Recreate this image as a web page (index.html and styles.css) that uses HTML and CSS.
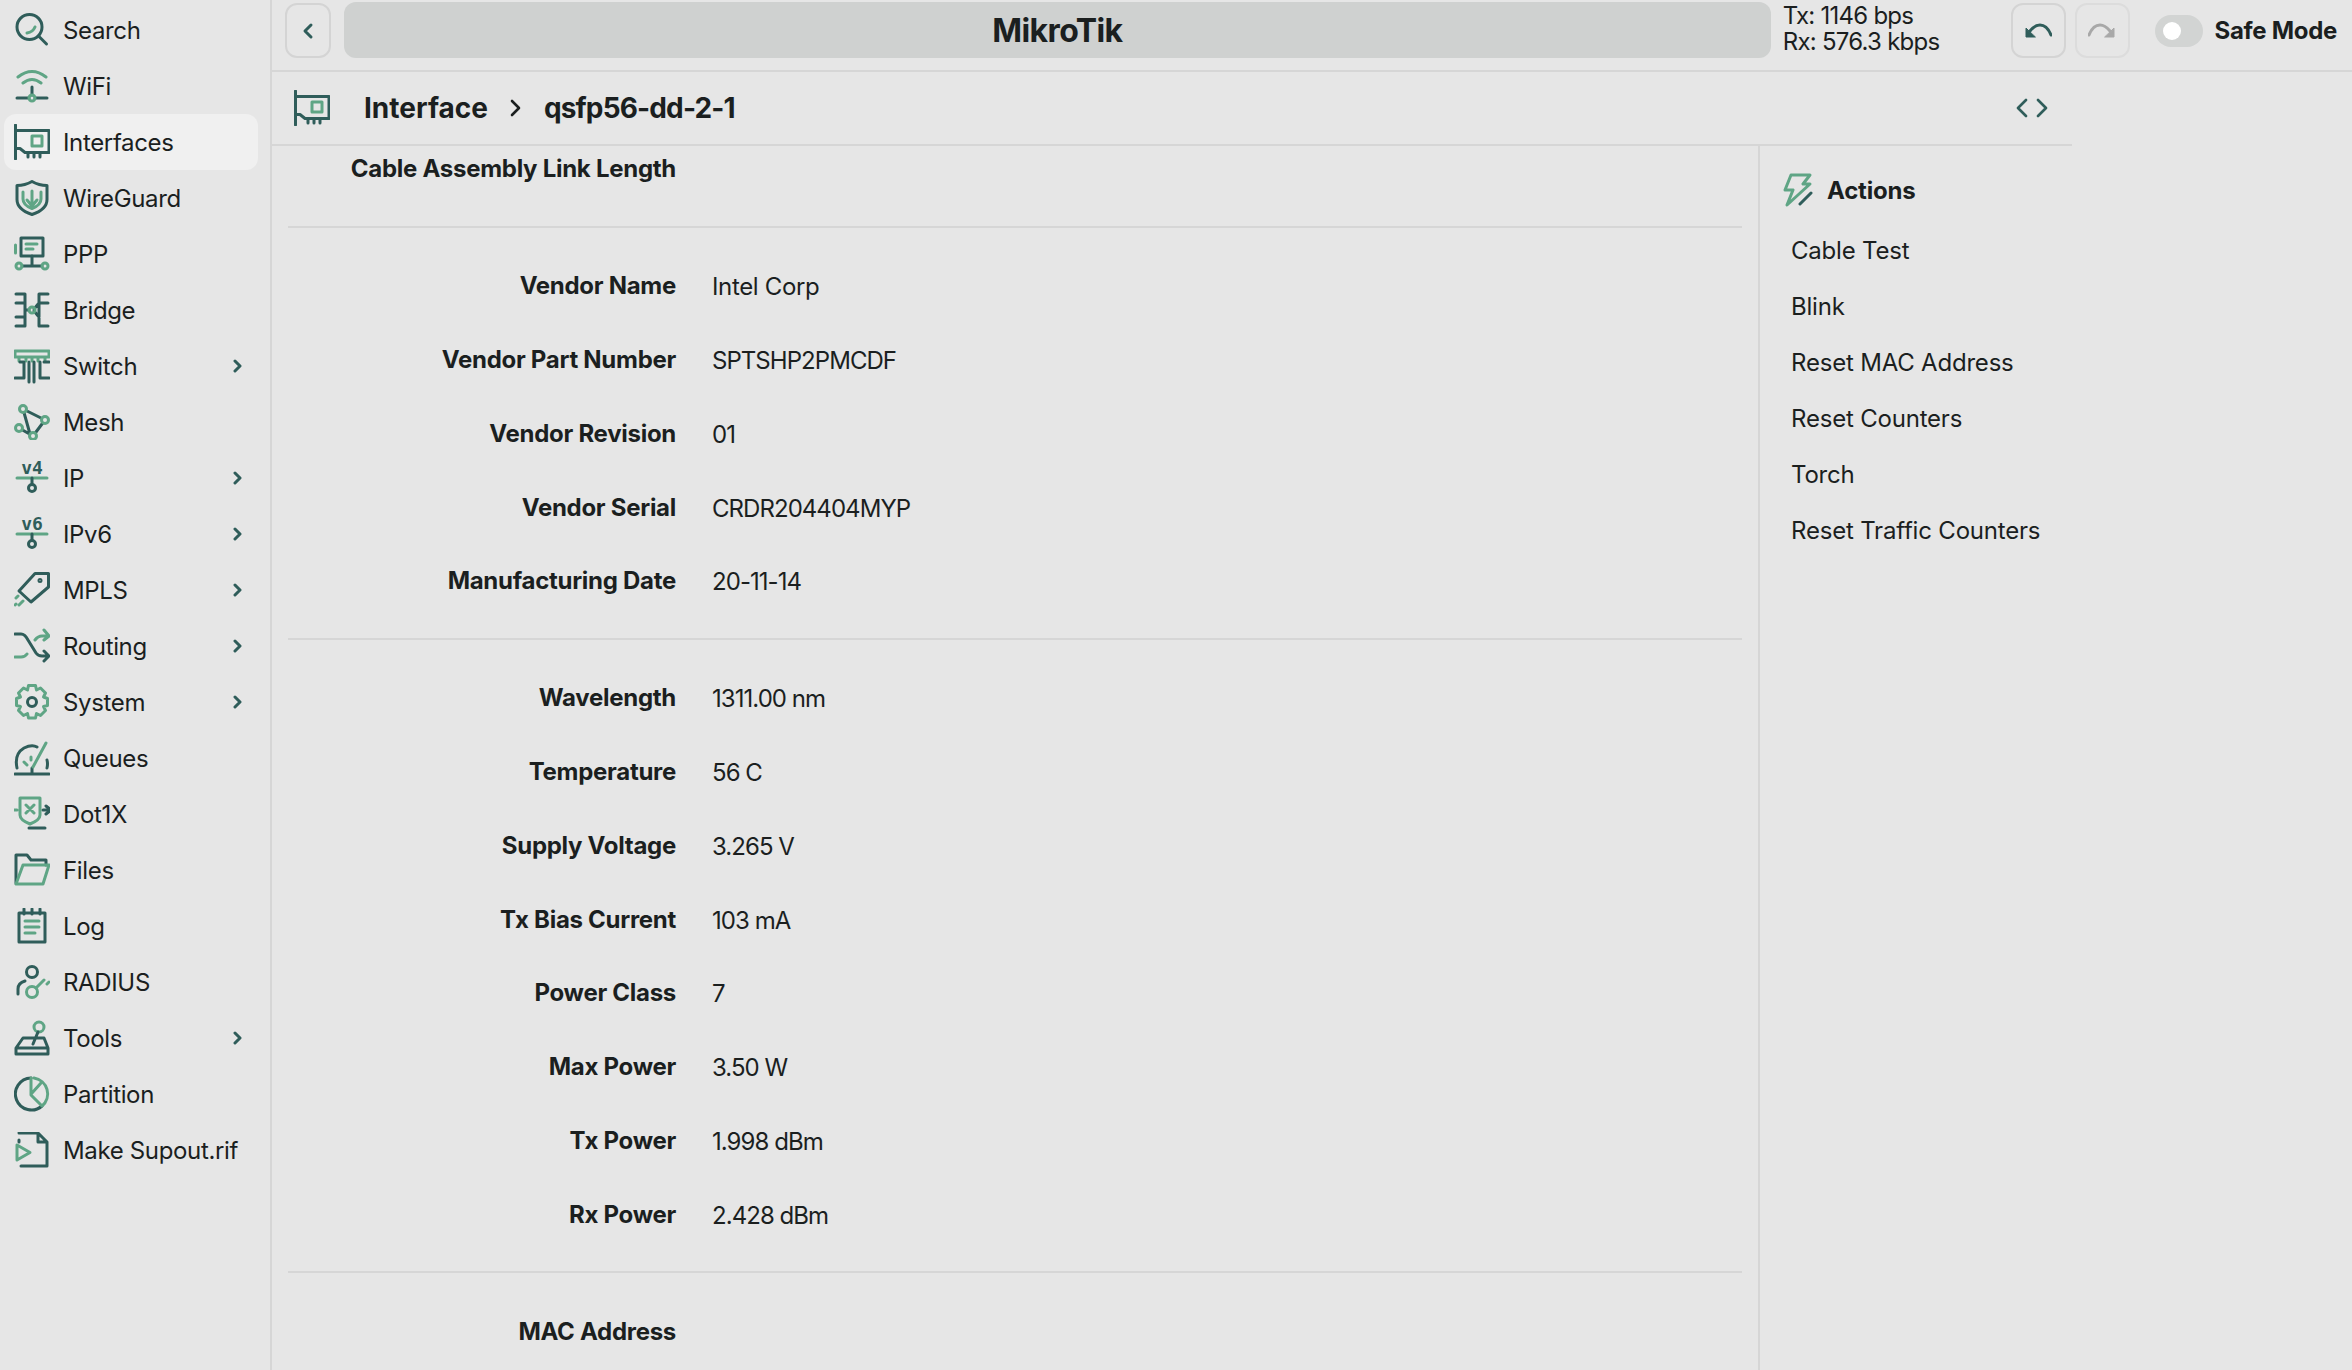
FILE: index.html
```html
<!DOCTYPE html>
<html lang="en">
<head>
    <meta charset="UTF-8">
    <meta name="viewport" content="width=device-width, initial-scale=1.0">
    <title>MikroTik</title>
    <link rel="stylesheet" href="styles.css">
</head>
<body>

    <aside class="sidebar">
        <a class="nav-item">
            <svg class="nav-icon" viewBox="0 0 36 36"><circle class="dk" cx="15.500" cy="15" r="12.500"/><path class="dk" d="M24.500 24l8 8"/><path class="lt" d="M13 21q6-1 8-6"/></svg>
            <span>Search</span>
        </a>
        <a class="nav-item">
            <svg class="nav-icon" viewBox="0 0 36 36"><path class="lt" d="M4 9q14-11 28 0M9 15q9-7 18 0"/><path class="dk" d="M18 19v8M3 30h12M21 30h12"/><circle class="lt" cx="18" cy="30" r="3"/></svg>
            <span>WiFi</span>
        </a>
        <a class="nav-item active">
            <svg class="nav-icon" viewBox="0 0 36 36"><path class="dk" d="M1.500 1v34M1.500 6.500h33.500v22H11l-5-4H1.500M14 29v4M20 29v4M26 29v4"/><rect class="lt" x="18" y="12" width="10" height="10"/></svg>
            <span>Interfaces</span>
        </a>
        <a class="nav-item">
            <svg class="nav-icon" viewBox="0 0 36 36"><path class="dk" d="M18 1.500q7 4 15 4v14q0 10-15 15q-15-5-15-15v-14q8 0 15-4z"/><path class="lt" d="M9 12v7q0 6 9 9.500q9-3.500 9-9.500v-7M18 11v15M13 20l5 6l5-6"/></svg>
            <span>WireGuard</span>
        </a>
        <a class="nav-item">
            <svg class="nav-icon" viewBox="0 0 36 36"><rect class="dk" x="7" y="2" width="22" height="18"/><path class="lt" d="M12 8h11M12 13h7M1.500 9v8"/><path class="dk" d="M18 20v10M8 30h20"/><circle class="lt" cx="5" cy="30" r="3"/><circle class="lt" cx="31" cy="30" r="3"/></svg>
            <span>PPP</span>
        </a>
        <a class="nav-item">
            <svg class="nav-icon" viewBox="0 0 36 36"><path class="dk" d="M2 2h9v32H2M2 11h9M2 25h9M34 2h-9v32h9M34 11h-9M11 18h4M25 11l-5 6M25 25l-5-6"/><circle class="lt" cx="18" cy="18" r="3"/></svg>
            <span>Bridge</span>
        </a>
        <a class="nav-item has-sub">
            <svg class="nav-icon" viewBox="0 0 36 36"><path class="lt" d="M1 3h34v6H1zM5 9v4M12 9v4M18 9v4M24 9v4M31 9v4"/><path class="dk" d="M1 30h9V14H6M15 14v20M20 14v20M26 14v16h9M35 14h-5"/></svg>
            <span>Switch</span>
            <svg class="sub-arrow" viewBox="0 0 12 14"><path d="M3 2l5 5l-5 5"/></svg>
        </a>
        <a class="nav-item">
            <svg class="nav-icon" viewBox="0 0 36 36"><path class="dk" d="M9 5L31 16L19 32L16 30L9 5M5 24l14 8"/><circle class="lt fill-bg" cx="9" cy="5" r="3.500"/><circle class="lt fill-bg" cx="31" cy="16" r="3.500"/><circle class="lt fill-bg" cx="19" cy="32" r="3.500"/><circle class="lt fill-bg" cx="5" cy="24" r="3.500"/></svg>
            <span>Mesh</span>
        </a>
        <a class="nav-item has-sub">
            <div class="ver-icon">
                <span class="ver-text">v4</span>
                <svg viewBox="0 0 36 20"><path class="lt" d="M3 2h30"/><path class="dk" d="M18 2v5"/><circle class="dk" cx="18" cy="12" r="3.500"/></svg>
            </div>
            <span>IP</span>
            <svg class="sub-arrow" viewBox="0 0 12 14"><path d="M3 2l5 5l-5 5"/></svg>
        </a>
        <a class="nav-item has-sub">
            <div class="ver-icon">
                <span class="ver-text">v6</span>
                <svg viewBox="0 0 36 20"><path class="lt" d="M3 2h30"/><path class="dk" d="M18 2v5"/><circle class="dk" cx="18" cy="12" r="3.500"/></svg>
            </div>
            <span>IPv6</span>
            <svg class="sub-arrow" viewBox="0 0 12 14"><path d="M3 2l5 5l-5 5"/></svg>
        </a>
        <a class="nav-item has-sub">
            <svg class="nav-icon" viewBox="0 0 36 36"><path class="dk" d="M21 1.500h13.500V15L17 30L5 19z"/><circle class="dk" cx="26" cy="8.500" r="1"/><path class="lt" d="M4 24l-2 2M9 29l-4 4M1 33l1-1"/></svg>
            <span>MPLS</span>
            <svg class="sub-arrow" viewBox="0 0 12 14"><path d="M3 2l5 5l-5 5"/></svg>
        </a>
        <a class="nav-item has-sub">
            <svg class="nav-icon" viewBox="0 0 36 36"><path class="dk" d="M1 6h6q4 0 7 6l8 13q2 3 6 3h6M30 23l5 5l-5 5"/><path class="lt" d="M1 29h6q4 0 6-3M21 12q3-4 7-4h6M30 2l5 6l-5 4"/></svg>
            <span>Routing</span>
            <svg class="sub-arrow" viewBox="0 0 12 14"><path d="M3 2l5 5l-5 5"/></svg>
        </a>
        <a class="nav-item has-sub">
            <svg class="nav-icon" viewBox="0 0 36 36"><path class="lt" d="M14.500 1.500h7l1 4.500l4-2l5 5l-2 4l4 1.500v7l-4 1l2 4l-5 5l-4-2l-1 4.500h-7l-1-4.500l-4 2l-5-5l2-4l-4-1v-7l4-1.500l-2-4l5-5l4 2z"/><circle class="dk" cx="18" cy="18" r="4.500"/></svg>
            <span>System</span>
            <svg class="sub-arrow" viewBox="0 0 12 14"><path d="M3 2l5 5l-5 5"/></svg>
        </a>
        <a class="nav-item">
            <svg class="nav-icon" viewBox="0 0 36 36"><path class="dk" d="M3 28q-3-14 7-20q8-4 13-1M33 20q1 4 0 8M1 34h34M18 34v-6"/><path class="lt" d="M19 27L32 3M10 22l3 3M17 17l0 3"/></svg>
            <span>Queues</span>
        </a>
        <a class="nav-item">
            <svg class="nav-icon" viewBox="0 0 36 36"><path class="lt" d="M6 2h20v17q0 5-10 9q-10-4-10-9zM12 9l8 8M20 9l-8 8M0 14h3"/><path class="dk" d="M29 14h8M32 10l5 4l-5 4M15 32h16"/></svg>
            <span>Dot1X</span>
        </a>
        <a class="nav-item">
            <svg class="nav-icon" viewBox="0 0 36 36"><path class="dk" d="M2 31V3h11l4 5h15v5"/><path class="lt" d="M2 32h27l6-19H9z"/></svg>
            <span>Files</span>
        </a>
        <a class="nav-item">
            <svg class="nav-icon" viewBox="0 0 36 36"><rect class="dk" x="5" y="5" width="26" height="29"/><path class="dk" d="M10 1v5M18 1v5M26 1v5"/><path class="lt" d="M11 13h14M11 19h14M11 25h10"/></svg>
            <span>Log</span>
        </a>
        <a class="nav-item">
            <svg class="nav-icon" viewBox="0 0 36 36"><circle class="dk" cx="18" cy="8" r="5.500"/><path class="dk" d="M4 30v-5q0-6 7-8"/><circle class="lt" cx="18" cy="28" r="5.500"/><path class="lt" d="M22 24l8-8M33 20l2-2"/></svg>
            <span>RADIUS</span>
        </a>
        <a class="nav-item has-sub">
            <svg class="nav-icon" viewBox="0 0 36 36"><circle class="lt" cx="25" cy="7" r="5"/><path class="dk" d="M24 12l-5 12M9 18h21l4 10H2zM2 28h32v6H2z"/></svg>
            <span>Tools</span>
            <svg class="sub-arrow" viewBox="0 0 12 14"><path d="M3 2l5 5l-5 5"/></svg>
        </a>
        <a class="nav-item">
            <svg class="nav-icon" viewBox="0 0 36 36"><path class="dk" d="M17 2a16 16 0 1 0 11 28"/><path class="lt" d="M20 2a16 16 0 0 1 8 28L17 19V2M18 17l9-10"/></svg>
            <span>Partition</span>
        </a>
        <a class="nav-item">
            <svg class="nav-icon" viewBox="0 0 36 36"><path class="dk" d="M5 1h19l9 9v24H7M24 1v9h9M5 8v2"/><path class="lt" d="M3 13v15l13-7.500z"/></svg>
            <span>Make Supout.rif</span>
        </a>
    </aside>

    <div class="page">
        <header class="topbar">
            <button class="tool-btn back-btn"><svg viewBox="0 0 28 18"><path d="M17 3l-6 6l6 6"/></svg></button>
            <div class="title-bar">MikroTik</div>
            <div class="traffic">
                <div>Tx: 1146 bps</div>
                <div>Rx: 576.3 kbps</div>
            </div>
            <button class="tool-btn"><svg viewBox="0 0 28 18"><path d="M6 9q5-6 10-6q7 0 11 10"/><path class="head" d="M2 6.500V15h9z"/></svg></button>
            <button class="tool-btn redo-btn"><svg viewBox="0 0 28 18"><path d="M22 9q-5-6-10-6q-7 0-11 10"/><path class="head" d="M26 6.500V15h-9z"/></svg></button>
            <div class="safe-mode">
                <span class="toggle"><span class="toggle-knob"></span></span>
                <span class="safe-label">Safe Mode</span>
            </div>
        </header>

        <div class="panel">
            <div class="breadcrumb">
                <svg class="crumb-icon" viewBox="0 0 36 36"><path class="dk" d="M1.500 1v34M1.500 6.500h33.500v22H11l-5-4H1.500M14 29v4M20 29v4M26 29v4"/><rect class="lt" x="18" y="12" width="10" height="10"/></svg>
                <span class="crumb">Interface</span>
                <svg class="crumb-sep" viewBox="0 0 14 18"><path d="M3 2l7 7l-7 7"/></svg>
                <span class="crumb crumb-name">qsfp56-dd-2-1</span>
                <svg class="code-toggle" viewBox="0 0 34 20"><path d="M11 2L3 10l8 8M23 2l8 8l-8 8"/></svg>
            </div>

            <div class="panel-body">
                <div class="details">
                    <div class="detail-list">
                        <div class="section">
                            <div class="row"><label>Cable Assembly Link Length</label></div>
                        </div>
                        <div class="section">
                            <div class="row"><label>Vendor Name</label><span>Intel Corp</span></div>
                            <div class="row"><label>Vendor Part Number</label><span class="num">SPTSHP2PMCDF</span></div>
                            <div class="row"><label>Vendor Revision</label><span class="num">01</span></div>
                            <div class="row"><label>Vendor Serial</label><span class="num">CRDR204404MYP</span></div>
                            <div class="row"><label>Manufacturing Date</label><span class="num">20-11-14</span></div>
                        </div>
                        <div class="section">
                            <div class="row"><label>Wavelength</label><span class="num">1311.00 nm</span></div>
                            <div class="row"><label>Temperature</label><span class="num">56 C</span></div>
                            <div class="row"><label>Supply Voltage</label><span class="num">3.265 V</span></div>
                            <div class="row"><label>Tx Bias Current</label><span class="num">103 mA</span></div>
                            <div class="row"><label>Power Class</label><span class="num">7</span></div>
                            <div class="row"><label>Max Power</label><span class="num">3.50 W</span></div>
                            <div class="row"><label>Tx Power</label><span class="num">1.998 dBm</span></div>
                            <div class="row"><label>Rx Power</label><span class="num">2.428 dBm</span></div>
                        </div>
                        <div class="section">
                            <div class="row"><label>MAC Address</label></div>
                        </div>
                    </div>
                </div>

                <div class="actions">
                    <div class="actions-title">
                        <svg class="actions-icon" viewBox="0 0 30 34"><path class="lt" d="M8 2h19l-7 9h7L4 32l6-15H2z"/><path class="dk" d="M17 31l11-11"/></svg>
                        <span>Actions</span>
                    </div>
                    <a class="action">Cable Test</a>
                    <a class="action">Blink</a>
                    <a class="action">Reset MAC Address</a>
                    <a class="action">Reset Counters</a>
                    <a class="action">Torch</a>
                    <a class="action">Reset Traffic Counters</a>
                </div>
            </div>
        </div>
    </div>

</body>
</html>
```
FILE: styles.css
```css
* {
    box-sizing: border-box;
}

html, body {
    height: 100%;
}

body {
    margin: 0;
    display: flex;
    overflow: hidden;
    font-family: Inter, "Noto Sans", sans-serif;
    font-size: 24px;
    color: #1b1f1f;
    background-color: #e6e6e6;
}

svg {
    display: block;
    fill: none;
    stroke-linecap: round;
    stroke-linejoin: round;
}

.dk {
    stroke: #2f5d5a;
    stroke-width: 3;
}

.lt {
    stroke: #5fa585;
    stroke-width: 3;
}

.fill-bg {
    fill: #e6e6e6;
}

/* sidebar */
.sidebar {
    width: 272px;
    flex-shrink: 0;
    padding: 2px 12px 0 4px;
    border-right: 2px solid #d6d6d6;
}

.nav-item {
    height: 56px;
    display: flex;
    align-items: center;
    padding-left: 10px;
    border-radius: 12px;
    letter-spacing: -0.35px;
}

.nav-item.active {
    background-color: #f0f0f0;
}

.nav-icon, .ver-icon {
    width: 36px;
    height: 36px;
    margin-right: 13px;
    flex-shrink: 0;
}

.ver-text {
    display: block;
    height: 16px;
    text-align: center;
    color: #2f5d5a;
    font-family: "DejaVu Sans Mono", monospace;
    font-size: 18px;
    font-weight: 700;
    line-height: 16px;
    letter-spacing: 0;
}

.sub-arrow {
    width: 12px;
    height: 14px;
    margin-left: auto;
    margin-right: 14px;
    stroke: #2f5d5a;
    stroke-width: 3;
}

/* top bar */
.page {
    flex: 1;
    min-width: 0;
    display: flex;
    flex-direction: column;
}

.topbar {
    height: 72px;
    display: flex;
    align-items: flex-start;
    padding: 3px 15px 0 13px;
    border-bottom: 2px solid #d6d6d6;
}

.tool-btn {
    width: 55px;
    height: 55px;
    padding: 0;
    display: flex;
    align-items: center;
    justify-content: center;
    background: none;
    border: 2px solid #d4d4d4;
    border-radius: 12px;
    margin-right: 9px;
    flex-shrink: 0;
}

.tool-btn svg {
    width: 28px;
    height: 18px;
    stroke: #2f5d5a;
    stroke-width: 3;
}

.tool-btn .head {
    fill: #2f5d5a;
    stroke-width: 1;
}

.back-btn {
    width: 46px;
    margin-right: 13px;
}

.redo-btn {
    border-color: #dcdcdc;
    margin-right: 25px;
}

.redo-btn svg {
    stroke: #a8a8a8;
}

.redo-btn .head {
    fill: #a8a8a8;
}

.title-bar {
    width: 1428px;
    height: 56px;
    margin-top: -1px;
    display: flex;
    align-items: center;
    justify-content: center;
    background-color: #cfd1d0;
    border-radius: 12px;
    font-size: 32px;
    font-weight: 700;
    letter-spacing: -0.6px;
}

.traffic {
    width: 228px;
    margin-left: 12px;
    font-size: 24px;
    line-height: 26px;
    letter-spacing: -0.75px;
}

.safe-mode {
    display: flex;
    align-items: center;
    height: 55px;
    font-weight: 700;
    letter-spacing: -0.3px;
    white-space: nowrap;
}

.toggle {
    width: 48px;
    height: 32px;
    margin-right: 12px;
    padding: 7px 0 0 8px;
    background-color: #d2d4d3;
    border-radius: 16px;
    flex-shrink: 0;
}

.toggle-knob {
    display: block;
    width: 18px;
    height: 18px;
    background-color: #fff;
    border-radius: 50%;
}

/* main panel */
.panel {
    width: 1800px;
    flex: 1;
    min-height: 0;
    display: flex;
    flex-direction: column;
}

.breadcrumb {
    height: 74px;
    flex-shrink: 0;
    display: flex;
    align-items: center;
    padding: 0 23px 0 22px;
    border-bottom: 2px solid #d6d6d6;
    font-size: 28px;
    font-weight: 700;
}

.crumb-icon {
    width: 36px;
    height: 36px;
    margin-right: 34px;
}

.crumb-sep {
    width: 14px;
    height: 18px;
    margin: 0 21px;
    stroke: #1b1f1f;
    stroke-width: 2.6;
}

.crumb-name {
    letter-spacing: -0.85px;
}

.code-toggle {
    width: 34px;
    height: 20px;
    margin-left: auto;
    stroke: #2f5d5a;
    stroke-width: 2.6;
}

.panel-body {
    flex: 1;
    min-height: 0;
    display: flex;
}

.details {
    width: 1488px;
    overflow: hidden;
    padding: 0 16px;
    border-right: 2px solid #d6d6d6;
}

.detail-list {
    margin-top: -14px;
}

.section {
    padding: 21px 0 20px;
    border-bottom: 2px solid #d6d6d6;
}

.section:first-child {
    padding-top: 0;
}

.row {
    height: 73.800px;
    display: flex;
    align-items: center;
}

.row label {
    width: 388px;
    margin-right: 36px;
    text-align: right;
    font-weight: 700;
    letter-spacing: -0.28px;
}

.row span {
    margin-top: 2px;
    letter-spacing: -0.35px;
}

.row .num {
    letter-spacing: -0.95px;
}

/* actions column */
.actions {
    flex: 1;
    padding: 22px 0 0 23px;
}

.actions-title {
    height: 44px;
    display: flex;
    align-items: center;
    margin-bottom: 10px;
    font-weight: 700;
    letter-spacing: -0.2px;
}

.actions-icon {
    width: 30px;
    height: 34px;
    margin-right: 14px;
}

.action {
    display: flex;
    align-items: center;
    height: 56px;
    padding-left: 8px;
    letter-spacing: -0.2px;
}
```
